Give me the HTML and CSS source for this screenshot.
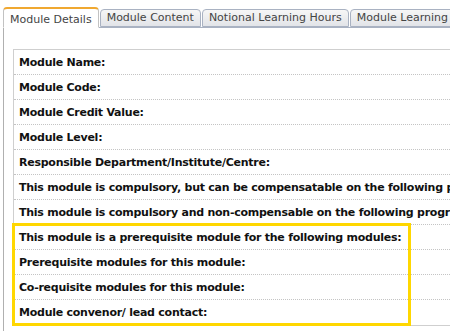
FILE: index.html
```html
<!DOCTYPE html>
<html lang="en">
<head>
  <meta charset="UTF-8">
  <title>Module Details</title>
  <link rel="stylesheet" href="styles.css">
</head>
<body>
  <div class="tabs">
    <div class="tab active">Module Details</div>
    <div class="tab">Module Content</div>
    <div class="tab">Notional Learning Hours</div>
    <div class="tab">Module Learning Outcomes</div>
  </div>

  <div class="panel">
    <div class="details">
      <div class="row">Module Name:</div>
      <div class="row">Module Code:</div>
      <div class="row">Module Credit Value:</div>
      <div class="row">Module Level:</div>
      <div class="row">Responsible Department/Institute/Centre:</div>
      <div class="row">This module is compulsory, but can be compensatable on the following programmes:</div>
      <div class="row">This module is compulsory and non-compensable on the following programmes:</div>

      <!-- highlighted group -->
      <div class="group">
        <div class="row">This module is a prerequisite module for the following modules:</div>
        <div class="row">Prerequisite modules for this module:</div>
        <div class="row">Co-requisite modules for this module:</div>
        <div class="row">Module convenor/ lead contact:</div>
        <span class="highlight"></span>
      </div>
    </div>
  </div>
</body>
</html>
```

FILE: styles.css
```css
html, body {
  overflow: hidden;
}

body {
  margin: 0;
  font-family: "DejaVu Sans", Verdana, sans-serif;
  background: #fff;
  color: #111;
}

.tabs {
  display: flex;
  align-items: flex-end;
  gap: 1px;
  padding: 7px 0 0 3px;
  white-space: nowrap;
}

.tab {
  flex: none;
  height: 16px;
  line-height: 16px;
  padding: 0 6px;
  font-size: 11px;
  color: #444;
  background: linear-gradient(#f6f6f6, #e2e4e8);
  border: 1px solid #a9b2c2;
  border-radius: 4px 4px 0 0;
}

.tab.active {
  height: 18px;
  line-height: 21px;
  padding: 0 6px;
  background: #fff;
  border-color: #c2c2c2;
  border-top: 2px solid #f0a830;
  border-bottom: 1px solid #fff;
  margin-bottom: -1px;
  position: relative;
}

.panel {
  margin-left: 3px;
  border-top: 1px solid #a9b2c2;
  border-left: 1px solid #b0b0b0;
  padding: 21px 0 20px 9px;
  min-height: 300px;
}

.details {
  width: 700px;
  border-top: 1px solid #cfcfcf;
  border-left: 1px solid #cfcfcf;
  border-bottom: 1px solid #cfcfcf;
}

.row {
  height: 24px;
  line-height: 25px;
  padding-left: 5px;
  font-size: 11px;
  font-weight: bold;
  letter-spacing: -0.25px;
  white-space: nowrap;
  border-bottom: 1px dotted #c4c4c4;
}

.group .row:last-of-type {
  border-bottom: none;
  height: 25px;
}

.group {
  position: relative;
}

.highlight {
  position: absolute;
  left: -2px;
  top: -2px;
  bottom: -1px;
  width: 393px;
  border: 3px solid #ffd700;
}
```
